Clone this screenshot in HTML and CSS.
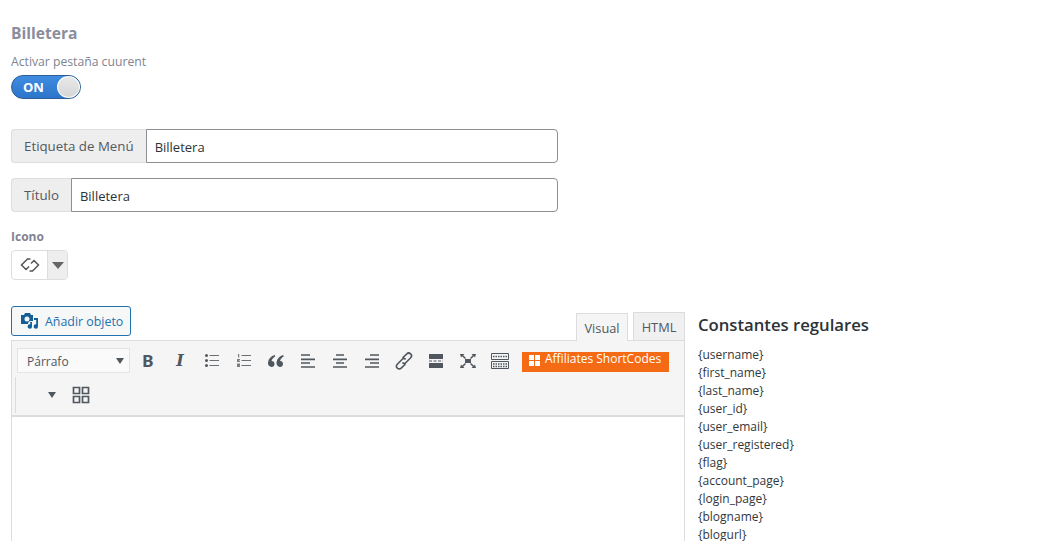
FILE: index.html
```html
<!DOCTYPE html>
<html lang="es">
<head>
<meta charset="utf-8">
<title>Billetera</title>
<link rel="stylesheet" href="styles.css">
</head>
<body>
<main class="page">
  <h2 class="title">Billetera</h2>
  <div class="sub">Activar pestaña cuurent</div>
  <div class="toggle"><span class="on">ON</span><span class="knob"></span></div>
  <div class="field f1"><span class="addon">Etiqueta de Menú</span><span class="input">Billetera</span></div>
  <div class="field f2"><span class="addon">Título</span><span class="input">Billetera</span></div>
  <div class="icon-label">Icono</div>
  <div class="picker">
    <span class="picked"><svg width="20" height="14" viewBox="0 0 20 14"><path d="M10.500 1H7.500L1.500 7 6 11.500 9 8.500M9.500 13H12.500L18.500 7 14 2.500 11 5.500" fill="none" stroke="#555" stroke-width="1.500"/></svg></span>
    <span class="caret"><i></i></span>
  </div>
  <div class="workspace">
    <section class="editor">
      <div class="editor-top">
        <button class="add"><svg width="18" height="16" viewBox="0 0 18 16"><path fill="#135e96" d="M0 2h3l1-2h5l1 2h2v6H9.500A3 3 0 0 0 7 10.500V11H0zM6 3.500a2.500 2.500 0 1 0 0 5 2.500 2.500 0 0 0 0-5zM17 5v8.500a2.200 2.200 0 1 1-1.800-2.100V7H13V5zM11 9v4.500a2.200 2.200 0 1 1-1.800-2.100V9z"/></svg>Añadir objeto</button>
        <div class="tabs"><span class="tab active">Visual</span><span class="tab">HTML</span></div>
      </div>
      <div class="box">
        <div class="toolbar">
          <div class="row r1">
            <span class="select">Párrafo<i></i></span>
            <span class="btn"><span class="bold">B</span></span>
            <span class="btn"><span class="ital">I</span></span>
            <span class="btn"><svg width="14" height="13" viewBox="0 0 14 13"><path fill="#50575e" d="M1.500 0a1.500 1.500 0 1 1 0 3 1.500 1.500 0 0 1 0-3zM1.500 5a1.500 1.500 0 1 1 0 3 1.500 1.500 0 0 1 0-3zM1.500 10a1.500 1.500 0 1 1 0 3 1.500 1.500 0 0 1 0-3z"/><path stroke="#6b7075" d="M4.500 1.500H14M4.500 6.500H14M4.500 11.500H14"/></svg></span>
            <span class="btn"><svg width="14" height="13" viewBox="0 0 14 13"><path fill="#7a7f84" d="M1 0h1.200v3.500H1zM0 5h3v1l-1.500 1H3v1H0zM0 9.500h3V13H0z"/><path stroke="#6b7075" d="M4.500 1.500H14M4.500 6.500H14M4.500 11.500H14"/></svg></span>
            <span class="btn"><svg width="16" height="12" viewBox="0 0 16 12"><path fill="#50575e" d="M6.800 0C3 1 .5 3.500 0 7.500A4 4 0 0 0 3.500 12 3.200 3.200 0 0 0 6.500 9 3 3 0 0 0 3.600 6C4 4 5.500 2.500 7.200 1.500zM15.300 0C11.500 1 9 3.500 8.500 7.500A4 4 0 0 0 12 12a3.200 3.200 0 0 0 3-3 3 3 0 0 0-2.900-3c.4-2 1.900-3.500 3.600-4.500z"/></svg></span>
            <span class="btn"><svg width="14" height="14" viewBox="0 0 14 14"><path stroke="#50575e" stroke-width="1.700" d="M0 1h9M0 5.300h14M0 9h9M0 13h14"/></svg></span>
            <span class="btn"><svg width="14" height="14" viewBox="0 0 14 14"><path stroke="#50575e" stroke-width="1.700" d="M3 1h8M0 5.300h14M3 9h8M0 13h14"/></svg></span>
            <span class="btn"><svg width="14" height="14" viewBox="0 0 14 14"><path stroke="#50575e" stroke-width="1.700" d="M5 1h9M0 5.300h14M5 9h9M0 13h14"/></svg></span>
            <span class="btn"><svg width="18" height="18" viewBox="0 0 18 18"><path fill="none" stroke="#50575e" stroke-width="1.600" d="M7.500 6 11.800 1.900a2.700 2.700 0 0 1 3.900 3.800L10.500 11a2.200 2.200 0 0 1-3.100-.4M10.500 12 6.200 16.100a2.700 2.700 0 0 1-3.900-3.800L7.500 7a2.200 2.200 0 0 1 3.100.4"/></svg></span>
            <span class="btn"><svg width="14" height="14" viewBox="0 0 14 14"><path fill="#50575e" d="M0 0h14v5H0zM0 9h14v5H0z"/><path stroke="#50575e" stroke-dasharray="3 1.500" d="M0 7h14"/></svg></span>
            <span class="btn"><svg width="16" height="14" viewBox="0 0 16 14"><path fill="#50575e" d="M5 5h6v4H5z"/><path fill="#50575e" d="M0 0h4.500L3.200 1.300 6 4 5 5 2 2.300 1 3.500zM16 0h-4.500l1.300 1.300L10 4l1 1 3-2.700L15 3.500zM0 14h4.500l-1.300-1.300L6 10 5 9l-3 2.700L1 10.500zM16 14h-4.500l1.300-1.300L10 10l1-1 3 2.700 1-1.200z"/></svg></span>
            <span class="btn"><svg width="18" height="16" viewBox="0 0 18 16"><path fill="none" stroke="#50575e" d="M.5.500h17v6H.5zM.5 8.500h17v7H.5z"/><path stroke="#50575e" stroke-width="1.500" stroke-dasharray="1.500 1" d="M2 3.500h14M2 11h14M2 13.500h14"/></svg></span>
            <span class="sc"><svg width="11" height="11" viewBox="0 0 11 11"><path fill="#fff" d="M0 0h5v5H0zM6 0h5v5H6zM0 6h5v5H0zM6 6h5v5H6z"/></svg>Affiliates ShortCodes</span>
          </div>
          <div class="row r2">
            <i class="more"></i>
            <svg width="18" height="18" viewBox="0 0 18 18"><path fill="none" stroke="#50575e" stroke-width="1.700" d="M1.500 1.500h6v6h-6zM10.500 1.500h6v6h-6zM1.500 10.500h6v6h-6zM10.500 10.500h6v6h-6z"/></svg>
          </div>
        </div>
        <div class="content"></div>
      </div>
    </section>
    <aside class="constants">
      <h3>Constantes regulares</h3>
      <ul>
        <li>{username}</li><li>{first_name}</li><li>{last_name}</li><li>{user_id}</li><li>{user_email}</li><li>{user_registered}</li><li>{flag}</li><li>{account_page}</li><li>{login_page}</li><li>{blogname}</li><li>{blogurl}</li>
      </ul>
    </aside>
  </div>
</main>
</body>
</html>
```
FILE: styles.css
```css
* { box-sizing: border-box; }
html, body { margin: 0; height: 541px; overflow: hidden; background: #fff; }
body { font-family: "Open Sans", "Noto Sans", sans-serif; font-size: 13px; color: #32373c; }
.page { padding: 22px 0 0 11px; }
.title { margin: 0; font-size: 15.600px; line-height: 22px; font-weight: 700; color: #8a8d9e; }
.sub { margin-top: 10px; font-size: 12.200px; line-height: 16px; color: #80848f; }
.toggle { margin-top: 5px; width: 70px; height: 24px; border-radius: 12px; background: linear-gradient(#3f8ce0, #2c75cc); border: 1px solid #2f5c94; display: flex; align-items: center; justify-content: space-between; padding: 0 0 0 11px; }
.on { color: #fff; font-weight: 700; font-size: 13px; }
.knob { width: 23px; height: 22px; border-radius: 50%; background: linear-gradient(#e8e8e8, #d6d6d6); border: 1px solid #fff; }
.field { display: flex; width: 547px; height: 34px; }
.f1 { margin-top: 30px; }
.f2 { margin-top: 15px; }
.addon { display: flex; align-items: center; padding: 0 12px; background: #eeeeee; border: 1px solid #ddd; border-right: 0; border-radius: 4px 0 0 4px; font-size: 13.300px; color: #55595f; white-space: nowrap; }
.input { flex: 1; display: flex; align-items: center; padding: 1px 8px 0; border: 1px solid #8c8f94; border-radius: 0 4px 4px 0; font-size: 13px; color: #2c3338; }
.icon-label { margin-top: 16px; font-size: 12px; line-height: 17px; font-weight: 700; color: #7f8390; }
.picker { margin-top: 5px; display: flex; width: 57px; height: 30px; border: 1px solid #ddd; border-radius: 4px; overflow: hidden; }
.picked { width: 35px; display: flex; align-items: center; justify-content: center; }
.caret { flex: 1; background: #eee; border-left: 1px solid #ddd; display: flex; align-items: center; justify-content: center; }
.caret i { border: 6px solid transparent; border-top: 7px solid #666; border-bottom: 0; }
.workspace { margin-top: 26px; display: flex; }
.editor { width: 674px; }
.editor-top { display: flex; justify-content: space-between; align-items: flex-end; height: 34px; }
.add { align-self: flex-start; display: flex; align-items: center; gap: 6px; height: 30px; width: 120px; padding: 0 0 0 9px; background: #f6f7f7; border: 1px solid #2271b1; border-radius: 3px; color: #2271b1; font: 12.400px "Open Sans", sans-serif; }
.tabs { display: flex; gap: 5px; }
.tab { display: flex; align-items: center; justify-content: center; width: 52px; height: 28px; background: #f0f0f1; border: 1px solid #dcdcde; border-bottom: 0; font-size: 12.800px; color: #50575e; }
.active { background: #f5f5f5; position: relative; top: 1px; z-index: 1; }
.box { border: 1px solid #dcdcde; }
.toolbar { height: 76px; background: #f5f5f5; border-bottom: 2px solid #dcdcde; padding: 7px 0 0 5px; }
.row { display: flex; align-items: center; }
.r1 { height: 25px; }
.select { flex: none; width: 113px; height: 25px; padding: 1px 0 0 9px; background: #fafafa; border: 1px solid #e4e4e4; display: flex; align-items: center; justify-content: space-between; font-size: 12px; color: #50575e; margin-right: 2px; }
.select i { border: 4.500px solid transparent; border-top: 6px solid #50575e; border-bottom: 0; margin-right: 5px; }
.btn { flex: none; width: 32px; height: 25px; display: flex; align-items: center; justify-content: center; }
.bold { font: 800 17px "Roboto", sans-serif; color: #50575e; }
.ital { font: italic 700 16px "DejaVu Serif", serif; color: #50575e; }
.sc { flex: none; margin-left: 6px; margin-top: 3px; width: 147px; height: 20px; background: #f56a14; color: #fff; display: flex; gap: 5px; align-items: flex-start; padding: 0 0 0 7px; font-size: 12px; line-height: 13px; white-space: nowrap; }
.sc svg { margin-top: 3px; flex: none; }
.r2 { height: 36px; margin-top: 4px; gap: 16px; padding-left: 32px; border-left: 1px solid #dcdcde; margin-left: -2px; }
.more { border: 4px solid transparent; border-top: 6px solid #50575e; border-bottom: 0; }
.content { height: 160px; background: #fff; }
.constants { margin-left: 13px; padding-top: 7px; }
.constants h3 { margin: 0 0 9px; font-size: 16.700px; line-height: 24px; font-weight: 600; color: #2c3338; }
.constants ul { list-style: none; margin: 0; padding: 0; }
.constants li { font-size: 12px; line-height: 18px; color: #32373c; }
```
